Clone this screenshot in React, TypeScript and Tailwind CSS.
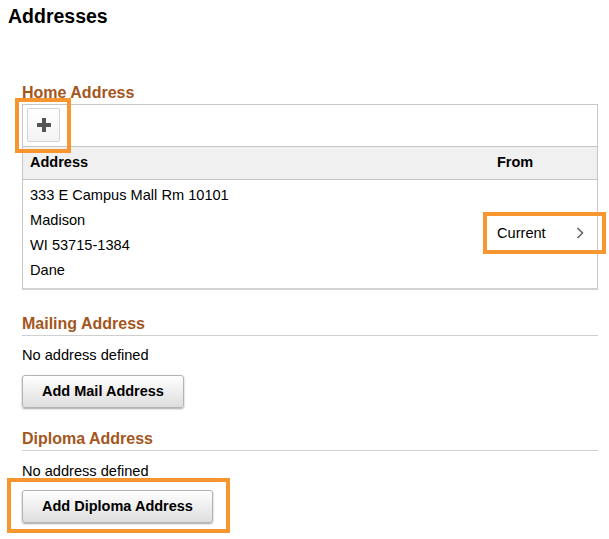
import React from "react";

function Btn({ children }: { children: React.ReactNode }) {
  return (
    <button className="h-[33px] px-[19px] rounded-[3px] border border-[#b3b3b3] bg-gradient-to-b from-[#ffffff] to-[#dedede] shadow-[0_1px_2px_rgba(0,0,0,0.35)] text-[14.5px] font-bold text-black leading-none">
      {children}
    </button>
  );
}

function Heading({ children, border = true }: { children: React.ReactNode; border?: boolean }) {
  return (
    <div
      className={
        "text-[16px] font-bold leading-[20px] text-[#a4561c] " +
        (border ? "border-b border-[#cfcfcf] pb-[1px]" : "")
      }
    >
      {children}
    </div>
  );
}

export default function App() {
  return (
    <div
      className="relative w-[609px] h-[539px] bg-white text-black overflow-hidden"
      style={{ fontFamily: '"Liberation Sans", Arial, sans-serif' }}
    >
      <div className="pl-[8px] pt-[4px] text-[19.5px] font-bold leading-[24px]">Addresses</div>

      <div className="pl-[22px] pr-[11px] mt-[55px]">
        <Heading border={false}>Home Address</Heading>
        <div className="mt-[1px] border border-b-2 border-[#c6c6c6] border-b-[#d2d2d2]">
          <div className="pl-[4px] pt-[3px] pb-[4px]">
            <button className="w-[33px] h-[34px] rounded-[2px] border border-[#d4d4d4] bg-gradient-to-b from-white to-[#f3f3f3] flex items-center justify-center">
              <svg width="16" height="16" viewBox="0 0 16 16">
                <rect x="6" y="1" width="4" height="14" fill="#555" />
                <rect x="1" y="6" width="14" height="4" fill="#555" />
              </svg>
            </button>
          </div>
          <div className="grid grid-cols-[1fr_100px] h-[34px] items-center bg-[#f0f0f0] border-y border-[#c6c6c6] text-[14.5px] font-bold">
            <div className="pl-[7px]">Address</div>
            <div>From</div>
          </div>
          <div className="grid grid-cols-[1fr_100px] pt-[3px] pb-[5px] text-[14.6px] leading-[25px]">
            <div className="pl-[7px]">
              <div>333 E Campus Mall Rm 10101</div>
              <div>Madison</div>
              <div>WI 53715-1384</div>
              <div>Dane</div>
            </div>
            <div className="flex items-center justify-between pr-[13px]">
              <span>Current</span>
              <svg width="8" height="12" viewBox="0 0 8 12">
                <path d="M1.5 1 L6.5 6 L1.5 11" fill="none" stroke="#666" strokeWidth="1.6" />
              </svg>
            </div>
          </div>
        </div>

        <div className="mt-[24px]">
          <Heading>Mailing Address</Heading>
        </div>
        <div className="mt-[9px] text-[14.6px] leading-[20px]">No address defined</div>
        <div className="mt-[10px]">
          <Btn>Add Mail Address</Btn>
        </div>

        <div className="mt-[21px]">
          <Heading>Diploma Address</Heading>
        </div>
        <div className="mt-[10px] text-[14.6px] leading-[20px]">No address defined</div>
        <div className="mt-[9px]">
          <Btn>Add Diploma Address</Btn>
        </div>
      </div>

      <div className="absolute left-[15px] top-[98px] w-[56px] h-[55px] border-4 border-[#f7962e]" />
      <div className="absolute left-[483px] top-[212px] w-[123px] h-[42px] border-4 border-[#f7962e]" />
      <div className="absolute left-[7px] top-[478px] w-[223px] h-[55px] border-4 border-[#f7962e]" />
    </div>
  );
}
